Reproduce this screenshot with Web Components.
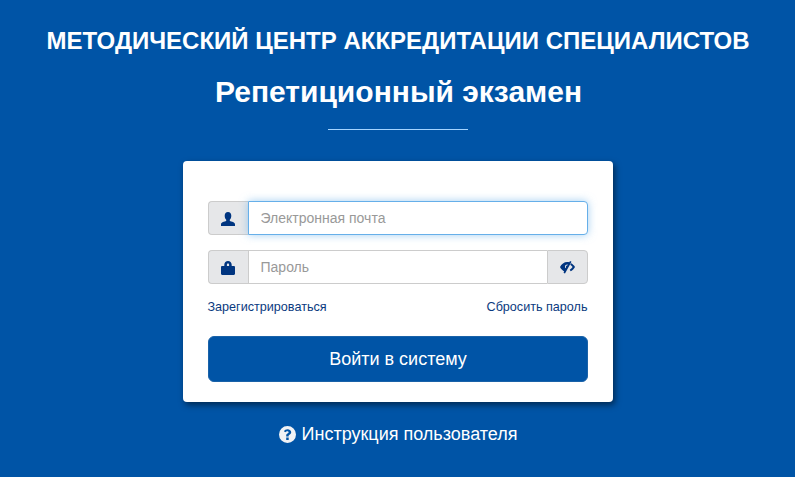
<!DOCTYPE html>
<html lang="ru">
<head>
<meta charset="utf-8">
<title>Репетиционный экзамен</title>
<style>
    html, body { margin: 0; height: 100%; }
    body { background: #0054a6; font-family: "Liberation Sans", Arial, sans-serif; overflow: hidden; }
    login-card a { color: #0a3a80; text-decoration: none; }
</style>
</head>
<body>
<login-page>
    <login-card>
        <login-field type="email" placeholder="Электронная почта" icon="user" focused></login-field>
        <login-field type="password" placeholder="Пароль" icon="lock" eye></login-field>
        <a slot="links" href="#">Зарегистрироваться</a>
        <a slot="links" href="#">Сбросить пароль</a>
    </login-card>
</login-page>
<script>
const ICONS = {
    user: `<svg width="14" height="14" viewBox="0 0 14 14"><path fill="#003580" d="M7 0c2.100 0 3.300 1.600 3.300 3.700 0 1.700-.7 3.300-1.500 4.100v1.300c1.700.7 5.200 1.200 5.200 3.300V14H0v-1.600c0-2.100 3.500-2.600 5.200-3.300V7.800C4.400 7 3.700 5.400 3.700 3.700 3.700 1.600 4.900 0 7 0z"/></svg>`,
    lock: `<svg width="14" height="14" viewBox="0 0 14 14"><path fill="#003580" d="M3.300 5V3.800C3.300 1.400 5 0 7 0s3.700 1.400 3.700 3.800V5h2.100c.7 0 1.200.5 1.200 1.200v6.600c0 .7-.5 1.200-1.200 1.200H1.200C.5 14 0 13.500 0 12.800V6.200C0 5.500.5 5 1.200 5h2.100zm2.600 0h2.200V3.800c0-.8-.4-1.300-1.100-1.300s-1.100.5-1.100 1.300V5z"/></svg>`,
    eye: `<svg width="15" height="14" viewBox="0 0 15 14"><path fill="#003580" d="M9.300 2.300L10 1l1.500.8L5 13.500l-1.500-.8.700-1.300C2.400 10.500 1 9 0 7c1.400-2.900 4.200-5 7.200-5 .7 0 1.400.1 2.100.3zM7.800 4.700C6.400 4.300 5.200 5.200 5 6.400c-.1.700.1 1.400.5 1.900l.6-1c-.2-.3-.2-.6-.1-.9.1-.5.700-.9 1.200-.8l.6-.9zM11.200 3.300C12.800 4.200 14.100 5.500 15 7c-1 1.900-2.400 3.400-4.300 4.300l-1-1.600c1.200-.6 2.100-1.500 2.900-2.700-.7-1-1.500-1.800-2.400-2.300l1-1.400z"/></svg>`,
    help: `<svg width="17" height="17" viewBox="0 0 17 17"><path fill="#f0f2f5" fill-rule="evenodd" d="M8.500 0a8.500 8.500 0 1 1 0 17 8.500 8.500 0 0 1 0-17zM7.200 11.600v2.300h2.500v-2.300H7.200zM8.600 3.200c-1.800 0-3 .8-3.700 2l1.500 1.100c.5-.6 1-1 1.900-1 .7 0 1.300.4 1.300 1 0 .6-.5.900-1.200 1.300-.8.500-1.200 1-1.200 2v.9h2.400v-.6c0-.5.300-.7.900-1.100.9-.5 1.700-1.200 1.700-2.500 0-1.800-1.700-3.100-3.600-3.100z"/></svg>`
};

class LoginPage extends HTMLElement {
    constructor() {
        super();
        this.attachShadow({mode: "open"}).innerHTML = `
            <style>
                :host { display: flex; flex-direction: column; align-items: center; color: #fff; padding-top: 26px; }
                h1 { margin: 0; padding-left: 1px; font-size: 24px; line-height: 30px; font-weight: 700; white-space: nowrap; }
                h2 { margin: 16px 0 0; padding-left: 2px; font-size: 30px; line-height: 40px; font-weight: 700; }
                hr { width: 140px; height: 1px; margin: 17px 0 31px; border: 0; background: #a5d4ff; }
                a { margin-top: 21px; padding-left: 1px; display: flex; align-items: center; gap: 6px; color: #fff; text-decoration: none; font-size: 18px; line-height: 22px; }
            </style>
            <h1>МЕТОДИЧЕСКИЙ ЦЕНТР АККРЕДИТАЦИИ СПЕЦИАЛИСТОВ</h1>
            <h2>Репетиционный экзамен</h2>
            <hr>
            <slot></slot>
            <a href="#">${ICONS.help}Инструкция пользователя</a>
        `;
    }
}

class LoginCard extends HTMLElement {
    constructor() {
        super();
        this.attachShadow({mode: "open"}).innerHTML = `
            <style>
                :host { display: flex; flex-direction: column; width: 380px; padding: 40px 25px 20px; background: #fff; border-radius: 4px; box-shadow: 2px 3px 6px rgba(0,0,0,.5); }
                .fields { display: flex; flex-direction: column; gap: 16px; }
                .links { display: flex; justify-content: space-between; margin: 16px 0 21px; font-size: 12.6px; line-height: 16px; }
                button { height: 46px; padding: 0 0 0 1px; border: 1px solid #1a62a8; border-radius: 6px; background: #0054a6; color: #fff; font: 18px "Liberation Sans", Arial, sans-serif; }
            </style>
            <div class="fields"><slot></slot></div>
            <div class="links"><slot name="links"></slot></div>
            <button type="button">Войти в систему</button>
        `;
    }
}

class LoginField extends HTMLElement {
    constructor() {
        super();
        const root = this.attachShadow({mode: "open"});
        const eye = this.hasAttribute("eye") ? `<span class="addon right">${ICONS.eye}</span>` : "";
        root.innerHTML = `
            <style>
                :host { display: flex; height: 34px; margin-bottom: -1px; box-sizing: border-box; font-size: 14px; }
                .addon { display: flex; align-items: center; justify-content: center; width: 40px; box-sizing: border-box; background: #e6e7e9; border: 1px solid #ccc; }
                .left { border-right: 0; border-radius: 4px 0 0 4px; padding-top: 2px; }
                .right { width: 41px; border-radius: 0 4px 4px 0; }
                input { flex: 1; min-width: 0; box-sizing: border-box; padding: 0 12px; border: 1px solid #ccc; font: 14px "Liberation Sans", Arial, sans-serif; color: #555; outline: 0; background: #fff; }
                input:last-child { border-radius: 0 4px 4px 0; }
                input.right-flat { border-right: 0; }
                input.focused { border: 1px solid #66afe9; box-shadow: 0 0 8px rgba(102,175,233,.6); position: relative; }
                input::placeholder { color: #999; opacity: 1; }
            </style>
            <span class="addon left">${ICONS[this.getAttribute("icon")]}</span>
            <input type="${this.getAttribute("type")}" placeholder="${this.getAttribute("placeholder")}"
                class="${this.hasAttribute("focused") ? "focused" : ""} ${eye ? "right-flat" : ""}">
            ${eye}
        `;
    }
}

customElements.define("login-page", LoginPage);
customElements.define("login-card", LoginCard);
customElements.define("login-field", LoginField);
</script>
</body>
</html>
